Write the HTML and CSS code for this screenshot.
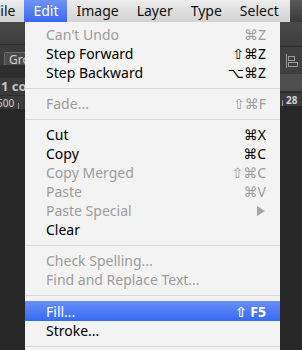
FILE: index.html
```html
<!DOCTYPE html>
<html>
<head>
<meta charset="utf-8">
<link rel="stylesheet" href="styles.css">
</head>
<body>
<div class="menubar">
  <span class="mb-item first">File</span>
  <span class="mb-item active">Edit</span>
  <span class="mb-item">Image</span>
  <span class="mb-item">Layer</span>
  <span class="mb-item">Type</span>
  <span class="mb-item">Select</span>
  <span class="mb-end"></span>
</div>
<div class="workspace">
  <div class="side left">
    <div class="opts"></div>
    <div class="optrow"><span class="btn">Gro</span></div>
    <div class="gap"></div>
    <div class="tab">1 cop</div>
    <div class="ruler"><span class="rnum">500</span><span class="tick"></span></div>
    <div class="canvas"></div>
  </div>
  <div class="menu">
    <div class="row dis"><span>Can't Undo</span><span class="sc">⌘Z</span></div>
    <div class="row"><span>Step Forward</span><span class="sc">⇧⌘Z</span></div>
    <div class="row"><span>Step Backward</span><span class="sc">⌥⌘Z</span></div>
    <div class="sep"></div>
    <div class="row dis"><span>Fade...</span><span class="sc">⇧⌘F</span></div>
    <div class="sep"></div>
    <div class="row"><span>Cut</span><span class="sc">⌘X</span></div>
    <div class="row"><span>Copy</span><span class="sc">⌘C</span></div>
    <div class="row dis"><span>Copy Merged</span><span class="sc">⇧⌘C</span></div>
    <div class="row dis"><span>Paste</span><span class="sc">⌘V</span></div>
    <div class="row dis"><span>Paste Special</span><span class="arrow"></span></div>
    <div class="row"><span>Clear</span></div>
    <div class="sep"></div>
    <div class="row dis"><span>Check Spelling...</span></div>
    <div class="row dis"><span>Find and Replace Text...</span></div>
    <div class="sep"></div>
    <div class="row sel"><span>Fill...</span><span class="sc bold">⇧ F5</span></div>
    <div class="row"><span>Stroke...</span></div>
    <div class="sep"></div>
  </div>
  <div class="side right">
    <div class="opts tall"></div>
    <div class="iconrow">
      <svg width="14" height="16" viewBox="0 0 14 16"><rect x="1" y="1" width="1" height="14" fill="#9a9a9a"/><rect x="3.5" y="3.5" width="6" height="4" fill="none" stroke="#9a9a9a"/><rect x="3.5" y="9.5" width="9" height="4" fill="none" stroke="#9a9a9a"/></svg>
    </div>
    <div class="panelbar"></div>
    <div class="ruler"><span class="tick"></span><span class="rnum">28</span></div>
    <div class="canvas"></div>
  </div>
</div>
</body>
</html>
```
FILE: styles.css
```css
html, body {
  margin: 0;
  padding: 0;
}
body {
  width: 302px;
  height: 350px;
  overflow: hidden;
  background: #262626;
  font-family: "Noto Sans", "DejaVu Sans", sans-serif;
}
.menubar {
  height: 22px;
  display: flex;
  align-items: center;
  background: linear-gradient(#ececec, #d2d2d2);
  white-space: nowrap;
  overflow: hidden;
}
.mb-item {
  padding: 0 9px;
  line-height: 22px;
  font-size: 14px;
  color: #111;
  flex: none;
}
.mb-item.first {
  margin-left: -16px;
}
.mb-item.active {
  background: linear-gradient(#6f93f8, #3a68f2);
  color: #fff;
}
.mb-end {
  flex: 1;
  align-self: stretch;
  margin-left: 2px;
  background: linear-gradient(#5a5a5a, #3a3a3a);
}
.workspace {
  display: flex;
  height: 328px;
}
.side {
  flex: none;
  display: flex;
  flex-direction: column;
  overflow: hidden;
  white-space: nowrap;
}
.left { width: 25px; }
.right { width: 22px; }
.opts {
  height: 22px;
  background: linear-gradient(#4a4a4a, #3d3d3d);
  border-bottom: 1px solid #2e2e2e;
}
.opts.tall { height: 24px; }
.optrow {
  height: 18px;
  background: #3c3c3c;
  padding-left: 4px;
  padding-top: 2px;
}
.btn {
  display: inline-block;
  height: 13px;
  line-height: 13px;
  padding: 0 4px;
  border: 1px solid #6a6a6a;
  border-radius: 2px;
  background: #4c4c4c;
  color: #d0d0d0;
  font-size: 12px;
}
.gap {
  height: 13px;
  background: #2e2e2e;
}
.tab {
  height: 17px;
  line-height: 17px;
  background: #3a3a3a;
  color: #c4c4c4;
  font-size: 13px;
  font-weight: bold;
  padding-left: 1px;
}
.ruler {
  height: 13px;
  background: #3a3a3a;
  border-top: 1px solid #2a2a2a;
  display: flex;
  align-items: center;
  color: #cfcfcf;
  font-size: 10px;
}
.left .ruler .rnum { margin-left: -3px; }
.tick {
  width: 1px;
  height: 6px;
  background: #9a9a9a;
  margin: 0 4px;
  align-self: flex-end;
}
.canvas {
  flex: 1;
  background: #272727;
}
.iconrow {
  height: 27px;
  background: #3f3f3f;
  display: flex;
  align-items: center;
  padding-left: 5px;
}
.panelbar {
  height: 17px;
  background: #4e4e4e;
  border-bottom: 1px solid #2d2d2d;
}
.right .ruler { font-weight: bold; }
.right .ruler .tick { margin: 0 3px 0 2px; }

.menu {
  width: 255px;
  flex: none;
  background: #f3f3f3;
  padding-top: 3px;
  font-size: 14px;
  color: #000;
  align-self: flex-start;
}
.row {
  height: 19px;
  line-height: 19px;
  display: flex;
  justify-content: space-between;
  align-items: center;
  padding: 0 14px 0 21px;
  white-space: nowrap;
}
.row.dis { color: #9c9c9c; }
.row.sel {
  background: linear-gradient(#6a8ef8, #356af3);
  color: #fff;
  height: 20px;
}
.sc { font-size: 14px; }
.sc.bold { font-weight: bold; }
.sep {
  height: 12px;
  display: flex;
  align-items: center;
}
.sep::before {
  content: "";
  flex: 1;
  height: 1px;
  background: #d9d9d9;
}
.arrow {
  width: 0;
  height: 0;
  border-top: 5px solid transparent;
  border-bottom: 5px solid transparent;
  border-left: 8px solid #a4a4a4;
  margin-right: 1px;
}
```
